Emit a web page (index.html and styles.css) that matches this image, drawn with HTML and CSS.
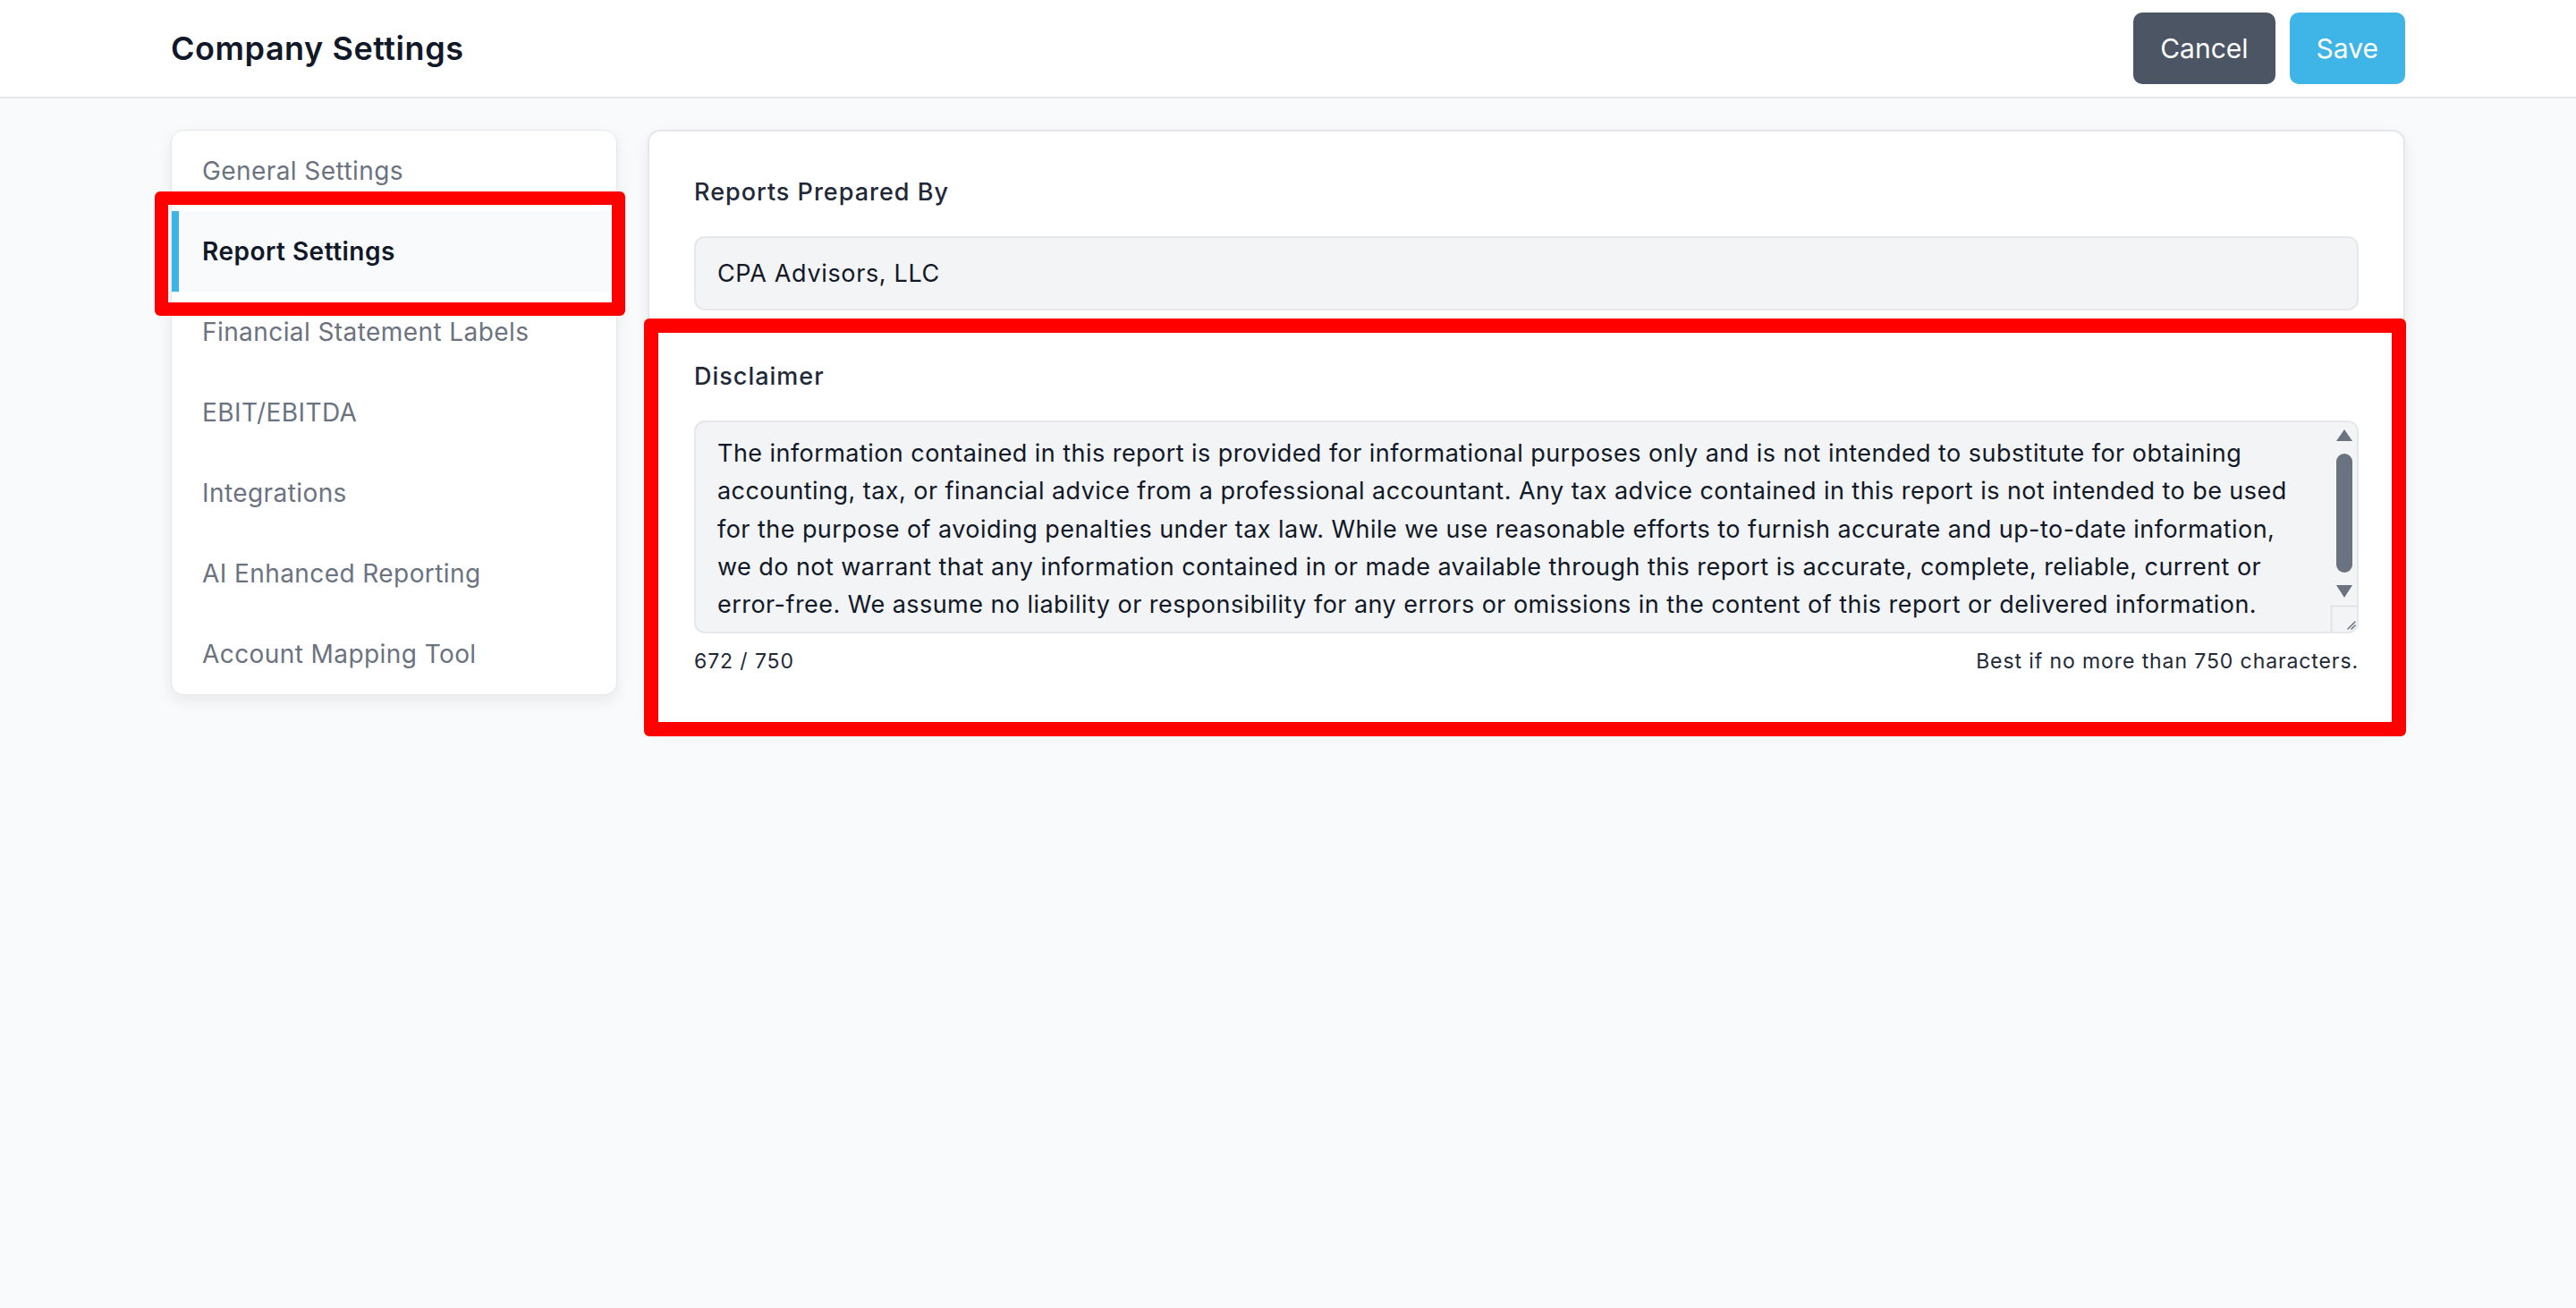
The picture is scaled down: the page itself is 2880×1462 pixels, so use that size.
FILE: index.html
```html
<!DOCTYPE html>
<html lang="en">
<head>
<meta charset="utf-8">
<title>Company Settings</title>
<link rel="stylesheet" href="styles.css">
</head>
<body>
<header class="topbar">
  <div class="topbar-inner">
    <h1 class="page-title">Company Settings</h1>
    <div class="actions">
      <button class="btn btn-cancel" type="button">Cancel</button>
      <button class="btn btn-save" type="button">Save</button>
    </div>
  </div>
</header>

<main class="layout">
  <nav class="side-nav">
    <a class="nav-item">General Settings</a>
    <a class="nav-item active">Report Settings</a>
    <a class="nav-item">Financial Statement Labels</a>
    <a class="nav-item">EBIT/EBITDA</a>
    <a class="nav-item">Integrations</a>
    <a class="nav-item">AI Enhanced Reporting</a>
    <a class="nav-item">Account Mapping Tool</a>
  </nav>

  <section class="panel">
    <div class="field">
      <label class="field-label">Reports Prepared By</label>
      <div class="text-input">CPA Advisors, LLC</div>
    </div>

    <div class="field field-disclaimer">
      <label class="field-label">Disclaimer</label>
      <div class="textarea-wrap">
        <textarea class="text-area">The information contained in this report is provided for informational purposes only and is not intended to substitute for obtaining accounting, tax, or financial advice from a professional accountant. Any tax advice contained in this report is not intended to be used for the purpose of avoiding penalties under tax law. While we use reasonable efforts to furnish accurate and up-to-date information, we do not warrant that any information contained in or made available through this report is accurate, complete, reliable, current or error-free. We assume no liability or responsibility for any errors or omissions in the content of this report or delivered information.</textarea>
        <svg class="scrollbar" width="32" height="238" viewBox="0 0 32 238" aria-hidden="true">
          <polygon points="7,23 25,23 16,10" fill="#6b7280"/>
          <rect x="7" y="37" width="18" height="133" rx="9" fill="#6b7280"/>
          <polygon points="7,184 25,184 16,198" fill="#6b7280"/>
          <path d="M1.5 236 V207.5 H30" fill="none" stroke="#dcdfe4" stroke-width="1.5"/>
          <path d="M20 233 L28 225 M24 233 L28 229" fill="none" stroke="#6b7280" stroke-width="1.6" stroke-linecap="round"/>
        </svg>
      </div>
      <div class="counter-row">
        <span>672 / 750</span>
        <span>Best if no more than 750 characters.</span>
      </div>
    </div>
  </section>
</main>

<div class="annot annot-nav"></div>
<div class="annot annot-disclaimer"></div>
</body>
</html>
```

FILE: styles.css
```css
html, body {
  margin: 0;
  padding: 0;
}

body {
  background: #f9fafb;
  font-family: Inter, "Noto Sans", "Liberation Sans", sans-serif;
  color: #111827;
  min-height: 1462px;
}

.topbar {
  background: #ffffff;
  border-bottom: 2px solid #e5e7eb;
  height: 108px;
}

.topbar-inner {
  width: 2498px;
  height: 100%;
  margin: 0 auto;
  display: flex;
  align-items: center;
  justify-content: space-between;
}

.page-title {
  margin: 0;
  font-size: 36px;
  font-weight: 600;
  letter-spacing: 0.55px;
  color: #111827;
}

.actions {
  display: flex;
  gap: 16px;
}

.btn {
  height: 80px;
  padding: 0 30px;
  border: 0;
  border-radius: 10px;
  font-family: inherit;
  font-size: 30px;
  font-weight: 400;
  color: #ffffff;
  cursor: pointer;
}

.btn-cancel {
  background: #4b5563;
}

.btn-save {
  background: #3eb5e6;
}

.layout {
  width: 2498px;
  margin: 35px auto 0;
  display: flex;
  align-items: flex-start;
  gap: 34px;
}

.side-nav {
  width: 499px;
  flex: none;
  box-sizing: border-box;
  background: #ffffff;
  border: 1px solid #e5e7eb;
  border-radius: 14px;
  box-shadow: 0 6px 16px rgba(17, 24, 39, 0.08);
  overflow: hidden;
  display: flex;
  flex-direction: column;
}

.nav-item {
  display: block;
  padding: 25px 20px 25px 26px;
  border-left: 8px solid transparent;
  font-size: 28px;
  line-height: 40px;
  letter-spacing: 0.42px;
  color: #6b7280;
}

.nav-item.active {
  border-left-color: #3db4e5;
  background: #f9fafb;
  color: #111827;
  font-weight: 600;
  letter-spacing: 0.48px;
}

.panel {
  flex: 1;
  box-sizing: border-box;
  background: #ffffff;
  border: 2px solid #e5e7eb;
  border-radius: 14px;
  padding: 48px 50px 57px;
  box-shadow: 0 6px 16px rgba(17, 24, 39, 0.07);
}

.field-label {
  display: block;
  font-size: 27px;
  line-height: 40px;
  font-weight: 500;
  letter-spacing: 1px;
  color: #1f2937;
  margin-bottom: 29px;
}

.text-input {
  background: #f3f4f6;
  border: 2px solid #e5e7eb;
  border-radius: 12px;
  padding: 18px 24px;
  font-size: 27px;
  line-height: 43px;
  letter-spacing: 0.65px;
  color: #111827;
}

.field-disclaimer {
  margin-top: 54px;
}

.textarea-wrap {
  position: relative;
  height: 238px;
}

.text-area {
  display: block;
  width: 100%;
  height: 238px;
  box-sizing: border-box;
  margin: 0;
  background: #f3f4f6;
  border: 2px solid #e5e7eb;
  border-radius: 12px;
  padding: 14px 54px 14px 24px;
  font-family: inherit;
  font-size: 27px;
  letter-spacing: 0.45px;
  line-height: 42.3px;
  color: #111827;
  overflow: hidden;
  resize: none;
  outline: none;
}

.scrollbar {
  position: absolute;
  right: 0;
  top: 0;
}

.counter-row {
  margin-top: 15px;
  display: flex;
  justify-content: space-between;
  font-size: 23px;
  line-height: 32px;
  letter-spacing: 0.9px;
  color: #1f2937;
}

.annot {
  position: absolute;
  box-sizing: border-box;
  border: 15px solid #ff0000;
  border-radius: 6px;
  pointer-events: none;
}

.annot-nav {
  left: 173px;
  top: 214px;
  width: 526px;
  height: 139px;
}

.annot-disclaimer {
  left: 720px;
  top: 356px;
  width: 1970px;
  height: 467px;
  border-width: 16px;
}
```
